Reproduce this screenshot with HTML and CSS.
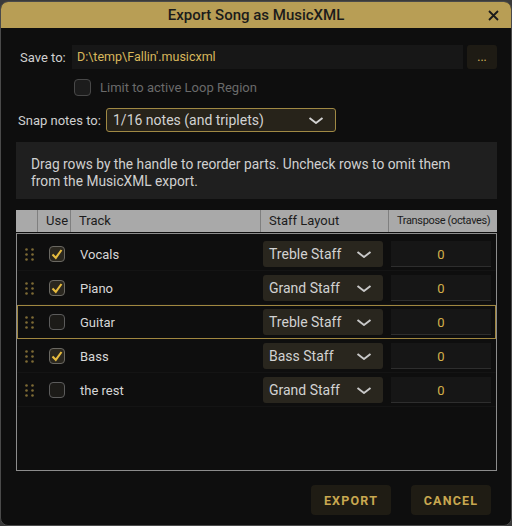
FILE: index.html
```html
<!DOCTYPE html>
<html lang="en">
<head>
    <meta charset="UTF-8">
    <meta name="viewport" content="width=device-width, initial-scale=1.0">
    <title>Export Song as MusicXML</title>
    <link rel="stylesheet" href="styles.css">
</head>
<body>
    <div class="dialog">
        <header class="titlebar">
            <span></span>
            <span class="title">Export Song as MusicXML</span>
            <button class="close" aria-label="Close">
                <svg width="11" height="11" viewBox="0 0 11 11"><path d="M1 1L10 10M10 1L1 10" stroke="#1b1b1b" stroke-width="1.8" fill="none"/></svg>
            </button>
        </header>

        <main class="content">
            <div class="save-row">
                <label class="label">Save to:</label>
                <div class="path-input">D:\temp\Fallin'.musicxml</div>
                <button class="browse">...</button>
            </div>

            <div class="loop-row">
                <span class="checkbox disabled"></span>
                <span class="loop-label">Limit to active Loop Region</span>
            </div>

            <div class="snap-row">
                <label class="label">Snap notes to:</label>
                <div class="select snap-select">
                    <span>1/16 notes (and triplets)</span>
                    <svg class="chevron" width="16" height="7" viewBox="0 0 16 7"><path d="M1.5 1L8 6L14.5 1" stroke="#d2d2d2" stroke-width="1.9" fill="none"/></svg>
                </div>
            </div>

            <div class="info">
                Drag rows by the handle to reorder parts. Uncheck rows to omit them from the MusicXML export.
            </div>

            <div class="table-head">
                <div class="th"></div>
                <div class="th">Use</div>
                <div class="th">Track</div>
                <div class="th">Staff Layout</div>
                <div class="th small">Transpose (octaves)</div>
            </div>

            <div class="table-body">
                <div class="row">
                    <div class="handle"><svg width="9" height="13" viewBox="0 0 9 13"><g fill="#7d6a35"><circle cx="1.5" cy="1.5" r="1.3"/><circle cx="7.5" cy="1.5" r="1.3"/><circle cx="1.5" cy="6.5" r="1.3"/><circle cx="7.5" cy="6.5" r="1.3"/><circle cx="1.5" cy="11.5" r="1.3"/><circle cx="7.5" cy="11.5" r="1.3"/></g></svg></div>
                    <div class="use"><span class="checkbox checked"><svg width="14" height="14" viewBox="0 0 14 14"><path d="M2.5 7.5L5.8 10.8L11.5 3" stroke="#e6bb3e" stroke-width="2.1" fill="none"/></svg></span></div>
                    <div class="track">Vocals</div>
                    <div class="staff"><div class="select"><span>Treble Staff</span><svg class="chevron" width="16" height="7" viewBox="0 0 16 7"><path d="M1.5 1L8 6L14.5 1" stroke="#c8c8c8" stroke-width="1.9" fill="none"/></svg></div></div>
                    <div class="transpose"><div class="num">0</div></div>
                </div>
                <div class="row">
                    <div class="handle"><svg width="9" height="13" viewBox="0 0 9 13"><g fill="#7d6a35"><circle cx="1.5" cy="1.5" r="1.3"/><circle cx="7.5" cy="1.5" r="1.3"/><circle cx="1.5" cy="6.5" r="1.3"/><circle cx="7.5" cy="6.5" r="1.3"/><circle cx="1.5" cy="11.5" r="1.3"/><circle cx="7.5" cy="11.5" r="1.3"/></g></svg></div>
                    <div class="use"><span class="checkbox checked"><svg width="14" height="14" viewBox="0 0 14 14"><path d="M2.5 7.5L5.8 10.8L11.5 3" stroke="#e6bb3e" stroke-width="2.1" fill="none"/></svg></span></div>
                    <div class="track">Piano</div>
                    <div class="staff"><div class="select"><span>Grand Staff</span><svg class="chevron" width="16" height="7" viewBox="0 0 16 7"><path d="M1.5 1L8 6L14.5 1" stroke="#c8c8c8" stroke-width="1.9" fill="none"/></svg></div></div>
                    <div class="transpose"><div class="num">0</div></div>
                </div>
                <div class="row selected">
                    <div class="handle"><svg width="9" height="13" viewBox="0 0 9 13"><g fill="#7d6a35"><circle cx="1.5" cy="1.5" r="1.3"/><circle cx="7.5" cy="1.5" r="1.3"/><circle cx="1.5" cy="6.5" r="1.3"/><circle cx="7.5" cy="6.5" r="1.3"/><circle cx="1.5" cy="11.5" r="1.3"/><circle cx="7.5" cy="11.5" r="1.3"/></g></svg></div>
                    <div class="use"><span class="checkbox"></span></div>
                    <div class="track">Guitar</div>
                    <div class="staff"><div class="select"><span>Treble Staff</span><svg class="chevron" width="16" height="7" viewBox="0 0 16 7"><path d="M1.5 1L8 6L14.5 1" stroke="#c8c8c8" stroke-width="1.9" fill="none"/></svg></div></div>
                    <div class="transpose"><div class="num">0</div></div>
                </div>
                <div class="row">
                    <div class="handle"><svg width="9" height="13" viewBox="0 0 9 13"><g fill="#7d6a35"><circle cx="1.5" cy="1.5" r="1.3"/><circle cx="7.5" cy="1.5" r="1.3"/><circle cx="1.5" cy="6.5" r="1.3"/><circle cx="7.5" cy="6.5" r="1.3"/><circle cx="1.5" cy="11.5" r="1.3"/><circle cx="7.5" cy="11.5" r="1.3"/></g></svg></div>
                    <div class="use"><span class="checkbox checked"><svg width="14" height="14" viewBox="0 0 14 14"><path d="M2.5 7.5L5.8 10.8L11.5 3" stroke="#e6bb3e" stroke-width="2.1" fill="none"/></svg></span></div>
                    <div class="track">Bass</div>
                    <div class="staff"><div class="select"><span>Bass Staff</span><svg class="chevron" width="16" height="7" viewBox="0 0 16 7"><path d="M1.5 1L8 6L14.5 1" stroke="#c8c8c8" stroke-width="1.9" fill="none"/></svg></div></div>
                    <div class="transpose"><div class="num">0</div></div>
                </div>
                <div class="row">
                    <div class="handle"><svg width="9" height="13" viewBox="0 0 9 13"><g fill="#7d6a35"><circle cx="1.5" cy="1.5" r="1.3"/><circle cx="7.5" cy="1.5" r="1.3"/><circle cx="1.5" cy="6.5" r="1.3"/><circle cx="7.5" cy="6.5" r="1.3"/><circle cx="1.5" cy="11.5" r="1.3"/><circle cx="7.5" cy="11.5" r="1.3"/></g></svg></div>
                    <div class="use"><span class="checkbox"></span></div>
                    <div class="track">the rest</div>
                    <div class="staff"><div class="select"><span>Grand Staff</span><svg class="chevron" width="16" height="7" viewBox="0 0 16 7"><path d="M1.5 1L8 6L14.5 1" stroke="#c8c8c8" stroke-width="1.9" fill="none"/></svg></div></div>
                    <div class="transpose"><div class="num">0</div></div>
                </div>
            </div>

            <div class="buttons">
                <button class="btn">EXPORT</button>
                <button class="btn">CANCEL</button>
            </div>
        </main>
    </div>
</body>
</html>
```

FILE: styles.css
```css
* {
    box-sizing: border-box;
}
body {
    margin: 0;
    background: #3a3a3a;
    font-family: Roboto, "Liberation Sans", sans-serif;
    color: #d2d2d2;
}
button {
    font-family: inherit;
    border: none;
    padding: 0;
    cursor: pointer;
}
.dialog {
    margin-top: 1px;
    width: 512px;
    height: 525px;
    background: #0e0e0e;
    border: 1px solid #4a4a4a;
    border-radius: 8px;
    overflow: hidden;
    display: flex;
    flex-direction: column;
}
.titlebar {
    height: 26px;
    background: #b89e55;
    display: grid;
    grid-template-columns: 1fr auto 1fr;
    align-items: center;
}
.title {
    font-size: 15px;
    font-weight: 500;
    color: #1b1b1b;
}
.close {
    justify-self: end;
    margin-right: 12px;
    background: none;
    display: flex;
}
.content {
    flex: 1;
    padding: 17px 14px 0 15px;
    display: flex;
    flex-direction: column;
}
.label {
    font-size: 13px;
    color: #d0d0d0;
}
.save-row {
    display: flex;
    align-items: center;
    height: 24px;
}
.save-row .label {
    padding-left: 4px;
    width: 56px;
}
.path-input {
    width: 391px;
    height: 24px;
    background: #171717;
    color: #d9b85c;
    font-size: 12.5px;
    line-height: 24px;
    padding-left: 5px;
}
.browse {
    margin-left: 4px;
    width: 30px;
    height: 24px;
    background: #1e1b14;
    color: #d9b85c;
    font-size: 12px;
    border-radius: 3px;
}
.loop-row {
    display: flex;
    align-items: center;
    margin-top: 10px;
    padding-left: 58px;
    height: 17px;
}
.loop-row .checkbox {
    width: 17px;
    height: 17px;
}
.loop-label {
    margin-left: 9px;
    font-size: 13px;
    color: #6a6a6a;
}
.checkbox {
    display: flex;
    align-items: center;
    justify-content: center;
    width: 16px;
    height: 16px;
    border: 1px solid #5c5c5c;
    border-radius: 4px;
    background: #1c1b18;
}
.checkbox.checked {
    background: #2a271f;
    border-color: #6a6862;
}
.checkbox.disabled {
    border-color: #484848;
    background: #1c1c1c;
}
.snap-row {
    display: flex;
    align-items: center;
    margin-top: 12px;
}
.snap-row .label {
    padding-left: 2px;
    width: 90px;
}
.select {
    display: flex;
    align-items: center;
    justify-content: space-between;
    background: #29261e;
    border-radius: 3px;
    font-size: 14px;
    color: #d2d2d2;
}
.snap-select {
    width: 230px;
    height: 24px;
    border: 1px solid #a08944;
    padding: 0 11px 0 6px;
    background: #27231a;
}
.info {
    margin-top: 10px;
    height: 57px;
    background: #1f1f1f;
    padding: 14px 40px 0 15px;
    font-size: 13.75px;
    line-height: 17px;
    color: #d0d0d0;
}
.table-head {
    margin-top: 11px;
    height: 22px;
    background: #a9a9a9;
    display: grid;
    grid-template-columns: 21px 33px 190px 128px 1fr;
}
.th {
    border-left: 1px solid #7f7f7f;
    color: #1c1c1c;
    font-size: 13px;
    line-height: 22px;
    padding-left: 8px;
    white-space: nowrap;
}
.th:first-child {
    border-left: none;
}
.th.small {
    font-size: 11px;
    letter-spacing: -0.35px;
    padding-left: 8px;
}
.table-body {
    margin-top: 1px;
    height: 238px;
    border: 1px solid #8c8c8c;
    padding-top: 3px;
}
.row {
    height: 34px;
    display: grid;
    grid-template-columns: 20px 33px 190px 128px 1fr;
    align-items: center;
    border: 1px solid transparent;
    border-bottom-color: #141414;
}
.row.selected {
    border-color: #a08740;
}
.handle {
    padding-left: 7px;
    display: flex;
}
.use {
    padding-left: 11px;
}
.track {
    padding-left: 9px;
    font-size: 13px;
    color: #d6d6d6;
}
.staff {
    padding-left: 2px;
}
.staff .select {
    width: 120px;
    height: 26px;
    padding: 0 11px 0 6px;
}
.transpose {
    padding-left: 2px;
}
.num {
    width: 100px;
    height: 26px;
    background: #161616;
    border-bottom: 1px solid #2e2e2e;
    color: #d4b04a;
    font-size: 13px;
    text-align: center;
    line-height: 27px;
}
.buttons {
    display: flex;
    justify-content: flex-end;
    gap: 20px;
    margin-top: 14px;
    padding-right: 6px;
}
.btn {
    width: 80px;
    height: 30px;
    border-radius: 4px;
    background: #1f1c14;
    color: #c9a850;
    font-size: 12.5px;
    font-weight: 700;
    letter-spacing: 1.2px;
}
```
